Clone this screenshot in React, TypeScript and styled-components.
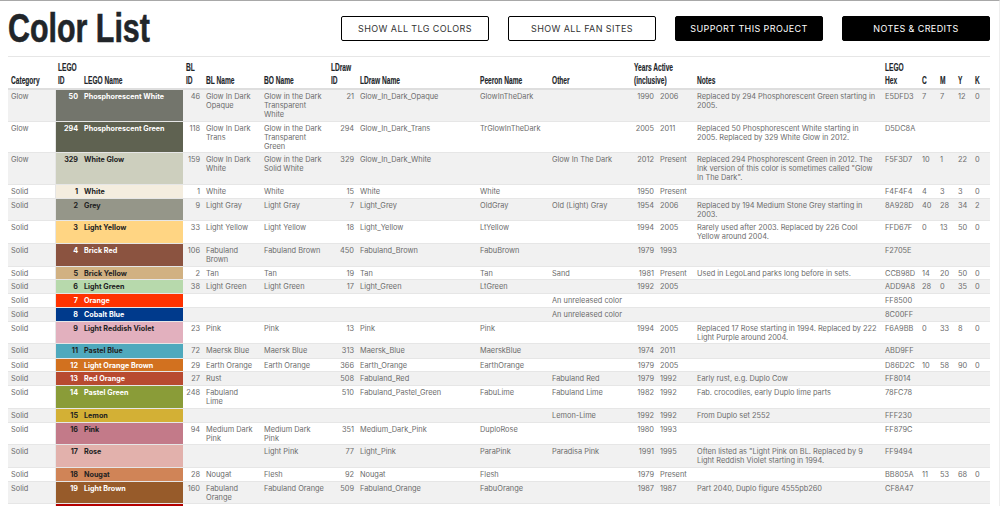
import styled, { createGlobalStyle } from 'styled-components';

const GlobalStyle = createGlobalStyle`
  html, body {
    margin: 0;
    padding: 0;
    height: 506px;
    overflow: hidden;
    background: #fff;
  }
`;

const Page = styled.div`
  width: 1000px;
  height: 506px;
  overflow: hidden;
  box-sizing: border-box;
  border-top: 1px solid #a8a8a8;
  border-right: 1px solid #eee;
  padding: 0 9px 0 8px;
  font-family: 'Inter', 'Liberation Sans', sans-serif;
`;

const TopBar = styled.div`
  display: flex;
  align-items: flex-start;
  justify-content: space-between;
  height: 55px;
`;

const Title = styled.h1`
  margin: 5px 0 0;
  font-family: 'Liberation Sans', sans-serif;
  font-weight: 700;
  font-size: 40px;
  line-height: 44px;
  color: #212529;
  white-space: nowrap;
  -webkit-text-stroke: 0.6px #212529;
  transform: scaleX(0.76);
  transform-origin: left center;
`;

const Buttons = styled.div`
  display: flex;
  gap: 19px;
  margin-top: 15px;
`;

const Button = styled.div<{ $dark?: boolean }>`
  box-sizing: border-box;
  width: 148px;
  height: 25px;
  display: flex;
  align-items: center;
  justify-content: center;
  border: 1px solid #000;
  border-radius: 2px;
  font-size: 9px;
  letter-spacing: 0.4px;
  color: ${(p) => (p.$dark ? '#fff' : '#333')};
  background: ${(p) => (p.$dark ? '#000' : '#fff')};
`;

const Table = styled.table`
  width: 982px;
  table-layout: fixed;
  border-collapse: collapse;
  border-top: 1px solid #e6e6e6;
  color: #6c6c6c;
  font-size: 7.4px;
  line-height: 9px;
`;

const Th = styled.th`
  padding: 4px 3px 1px;
  font-family: 'Liberation Sans', sans-serif;
  font-weight: 700;
  font-size: 10px;
  line-height: 13px;
  color: #212529;
  text-align: left;
  vertical-align: bottom;
  white-space: nowrap;
  border-bottom: 2px solid #dedede;
`;

// Oswald is not installed, so the heading text is squeezed to its width
const Condensed = styled.span`
  display: inline-block;
  transform: scaleX(0.66);
  transform-origin: left center;
  -webkit-text-stroke: 0.15px #212529;
`;

const Tr = styled.tr<{ $h: number; $striped: boolean }>`
  height: ${(p) => p.$h}px;
  background: ${(p) => (p.$striped ? '#f1f1f1' : '#fff')};
`;

const Td = styled.td<{ $right?: boolean }>`
  padding: 2px 3px 1px;
  vertical-align: top;
  text-align: ${(p) => (p.$right ? 'right' : 'left')};
  white-space: pre-line;
  border-bottom: 1px solid #e6e6e6;
  overflow: hidden;
`;

const SwatchId = styled(Td)<{ $bg: string; $fg: string }>`
  background: ${(p) => p.$bg};
  color: ${(p) => p.$fg};
  font-weight: 700;
  font-size: 7.2px;
  text-align: right;
  border-left: 1px solid #e6e6e6;
`;

const SwatchName = styled(Td)<{ $bg: string; $fg: string }>`
  background: ${(p) => p.$bg};
  color: ${(p) => p.$fg};
  font-weight: 700;
  font-size: 7.2px;
  white-space: nowrap;
`;

type Row = {
  cat?: string;
  id?: string;
  name?: string;
  bg: string;
  fg: string;
  h: number;
  bl?: string;
  blName?: string;
  bo?: string;
  ld?: string;
  ldName?: string;
  peeron?: string;
  other?: string;
  from?: string;
  to?: string;
  notes?: string;
  hex?: string;
  c?: string;
  m?: string;
  y?: string;
  k?: string;
};

const W = '#fff';
const K = '#222';

const rows: Row[] = [
  { cat: 'Glow', id: '50', name: 'Phosphorescent White', bg: '#73756c', fg: W, h: 32, bl: '46', blName: 'Glow In Dark\nOpaque', bo: 'Glow in the Dark\nTransparent\nWhite', ld: '21', ldName: 'Glow_In_Dark_Opaque', peeron: 'GlowInTheDark', from: '1990', to: '2006', notes: 'Replaced by 294 Phosphorescent Green starting in 2005.', hex: 'E5DFD3', c: '7', m: '7', y: '12', k: '0' },
  { cat: 'Glow', id: '294', name: 'Phosphorescent Green', bg: '#5f6251', fg: W, h: 31, bl: '118', blName: 'Glow In Dark\nTrans', bo: 'Glow in the Dark\nTransparent\nGreen', ld: '294', ldName: 'Glow_In_Dark_Trans', peeron: 'TrGlowInTheDark', from: '2005', to: '2011', notes: 'Replaced 50 Phosphorescent White starting in 2005. Replaced by 329 White Glow in 2012.', hex: 'D5DC8A' },
  { cat: 'Glow', id: '329', name: 'White Glow', bg: '#cdcfbe', fg: K, h: 32, bl: '159', blName: 'Glow In Dark\nWhite', bo: 'Glow in the Dark\nSolid White', ld: '329', ldName: 'Glow_In_Dark_White', other: 'Glow In The Dark', from: '2012', to: 'Present', notes: 'Replaced 294 Phosphorescent Green in 2012. The Ink version of this color is sometimes called "Glow In The Dark".', hex: 'F5F3D7', c: '10', m: '1', y: '22', k: '0' },
  { cat: 'Solid', id: '1', name: 'White', bg: '#f4eddf', fg: K, h: 14, bl: '1', blName: 'White', bo: 'White', ld: '15', ldName: 'White', peeron: 'White', from: '1950', to: 'Present', hex: 'F4F4F4', c: '4', m: '3', y: '3', k: '0' },
  { cat: 'Solid', id: '2', name: 'Grey', bg: '#959689', fg: K, h: 22, bl: '9', blName: 'Light Gray', bo: 'Light Gray', ld: '7', ldName: 'Light_Grey', peeron: 'OldGray', other: 'Old (Light) Gray', from: '1954', to: '2006', notes: 'Replaced by 194 Medium Stone Grey starting in 2003.', hex: '8A928D', c: '40', m: '28', y: '34', k: '2' },
  { cat: 'Solid', id: '3', name: 'Light Yellow', bg: '#ffd583', fg: K, h: 23, bl: '33', blName: 'Light Yellow', bo: 'Light Yellow', ld: '18', ldName: 'Light_Yellow', peeron: 'LtYellow', from: '1994', to: '2005', notes: 'Rarely used after 2003. Replaced by 226 Cool Yellow around 2004.', hex: 'FFD67F', c: '0', m: '13', y: '50', k: '0' },
  { cat: 'Solid', id: '4', name: 'Brick Red', bg: '#8b5340', fg: W, h: 23, bl: '106', blName: 'Fabuland\nBrown', bo: 'Fabuland Brown', ld: '450', ldName: 'Fabuland_Brown', peeron: 'FabuBrown', from: '1979', to: '1993', hex: 'F2705E' },
  { cat: 'Solid', id: '5', name: 'Brick Yellow', bg: '#d1b182', fg: K, h: 13, bl: '2', blName: 'Tan', bo: 'Tan', ld: '19', ldName: 'Tan', peeron: 'Tan', other: 'Sand', from: '1981', to: 'Present', notes: 'Used in LegoLand parks long before in sets.', hex: 'CCB98D', c: '14', m: '20', y: '50', k: '0' },
  { cat: 'Solid', id: '6', name: 'Light Green', bg: '#b7d9ac', fg: K, h: 14, bl: '38', blName: 'Light Green', bo: 'Light Green', ld: '17', ldName: 'Light_Green', peeron: 'LtGreen', from: '1992', to: '2005', hex: 'ADD9A8', c: '28', m: '0', y: '35', k: '0' },
  { cat: 'Solid', id: '7', name: 'Orange', bg: '#ff3300', fg: W, h: 14, other: 'An unreleased color', hex: 'FF8500' },
  { cat: 'Solid', id: '8', name: 'Cobalt Blue', bg: '#003a8c', fg: W, h: 14, other: 'An unreleased color', hex: '8C00FF' },
  { cat: 'Solid', id: '9', name: 'Light Reddish Violet', bg: '#e2b0be', fg: K, h: 22, bl: '23', blName: 'Pink', bo: 'Pink', ld: '13', ldName: 'Pink', peeron: 'Pink', from: '1994', to: '2005', notes: 'Replaced 17 Rose starting in 1994. Replaced by 222 Light Purple around 2004.', hex: 'F6A9BB', c: '0', m: '33', y: '8', k: '0' },
  { cat: 'Solid', id: '11', name: 'Pastel Blue', bg: '#4fa9bd', fg: K, h: 15, bl: '72', blName: 'Maersk Blue', bo: 'Maersk Blue', ld: '313', ldName: 'Maersk_Blue', peeron: 'MaerskBlue', from: '1974', to: '2011', hex: 'ABD9FF' },
  { cat: 'Solid', id: '12', name: 'Light Orange Brown', bg: '#d2711f', fg: W, h: 13, bl: '29', blName: 'Earth Orange', bo: 'Earth Orange', ld: '366', ldName: 'Earth_Orange', peeron: 'EarthOrange', from: '1979', to: '2005', hex: 'D86D2C', c: '10', m: '58', y: '90', k: '0' },
  { cat: 'Solid', id: '13', name: 'Red Orange', bg: '#b84a30', fg: W, h: 14, bl: '27', blName: 'Rust', ld: '508', ldName: 'Fabuland_Red', other: 'Fabuland Red', from: '1979', to: '1992', notes: 'Early rust, e.g. Duplo Cow', hex: 'FF8014' },
  { cat: 'Solid', id: '14', name: 'Pastel Green', bg: '#8a9c38', fg: W, h: 23, bl: '248', blName: 'Fabuland\nLime', ld: '510', ldName: 'Fabuland_Pastel_Green', peeron: 'FabuLime', other: 'Fabuland Lime', from: '1982', to: '1992', notes: 'Fab. crocodiles, early Duplo lime parts', hex: '78FC78' },
  { cat: 'Solid', id: '15', name: 'Lemon', bg: '#d3b035', fg: K, h: 14, other: 'Lemon-Lime', from: '1992', to: '1992', notes: 'From Duplo set 2552', hex: 'FFF230' },
  { cat: 'Solid', id: '16', name: 'Pink', bg: '#c37a89', fg: K, h: 22, bl: '94', blName: 'Medium Dark\nPink', bo: 'Medium Dark\nPink', ld: '351', ldName: 'Medium_Dark_Pink', peeron: 'DuploRose', from: '1980', to: '1993', hex: 'FF879C' },
  { cat: 'Solid', id: '17', name: 'Rose', bg: '#e2b1ac', fg: K, h: 23, bo: 'Light Pink', ld: '77', ldName: 'Light_Pink', peeron: 'ParaPink', other: 'Paradisa Pink', from: '1991', to: '1995', notes: 'Often listed as "Light Pink on BL. Replaced by 9 Light Reddish Violet starting in 1994.', hex: 'FF9494' },
  { cat: 'Solid', id: '18', name: 'Nougat', bg: '#d08457', fg: K, h: 14, bl: '28', blName: 'Nougat', bo: 'Flesh', ld: '92', ldName: 'Nougat', peeron: 'Flesh', from: '1979', to: 'Present', hex: 'BB805A', c: '11', m: '53', y: '68', k: '0' },
  { cat: 'Solid', id: '19', name: 'Light Brown', bg: '#975b2a', fg: W, h: 22, bl: '160', blName: 'Fabuland\nOrange', bo: 'Fabuland Orange', ld: '509', ldName: 'Fabuland_Orange', peeron: 'FabuOrange', from: '1987', to: '1987', notes: 'Part 2040, Duplo figure 4555pb260', hex: 'CF8A47' },
  { bg: '#b40000', fg: W, h: 14 },
];

const widths = [47, 26, 102, 20, 58, 67, 29, 120, 72, 82, 26, 37, 188, 37, 18, 18, 17, 18];

export default function App() {
  return (
    <Page>
      <GlobalStyle />
      <TopBar>
        <Title>Color List</Title>
        <Buttons>
          <Button>SHOW ALL TLG COLORS</Button>
          <Button>SHOW ALL FAN SITES</Button>
          <Button $dark>SUPPORT THIS PROJECT</Button>
          <Button $dark>NOTES &amp; CREDITS</Button>
        </Buttons>
      </TopBar>
      <Table>
        <colgroup>
          {widths.map((w, i) => (
            <col key={i} width={w} />
          ))}
        </colgroup>
        <thead>
          <tr>
            <Th><Condensed>Category</Condensed></Th>
            <Th><Condensed>LEGO<br />ID</Condensed></Th>
            <Th><Condensed>LEGO Name</Condensed></Th>
            <Th><Condensed>BL<br />ID</Condensed></Th>
            <Th><Condensed>BL Name</Condensed></Th>
            <Th><Condensed>BO Name</Condensed></Th>
            <Th><Condensed>LDraw<br />ID</Condensed></Th>
            <Th><Condensed>LDraw Name</Condensed></Th>
            <Th><Condensed>Peeron Name</Condensed></Th>
            <Th><Condensed>Other</Condensed></Th>
            <Th colSpan={2}><Condensed>Years Active<br />(inclusive)</Condensed></Th>
            <Th><Condensed>Notes</Condensed></Th>
            <Th><Condensed>LEGO<br />Hex</Condensed></Th>
            <Th><Condensed>C</Condensed></Th>
            <Th><Condensed>M</Condensed></Th>
            <Th><Condensed>Y</Condensed></Th>
            <Th><Condensed>K</Condensed></Th>
          </tr>
        </thead>
        <tbody>
          {rows.map((r, i) => (
            <Tr key={i} $h={r.h} $striped={i % 2 === 0}>
              <Td>{r.cat}</Td>
              <SwatchId $bg={r.bg} $fg={r.fg}>{r.id}</SwatchId>
              <SwatchName $bg={r.bg} $fg={r.fg}>{r.name}</SwatchName>
              <Td $right>{r.bl}</Td>
              <Td>{r.blName}</Td>
              <Td>{r.bo}</Td>
              <Td $right>{r.ld}</Td>
              <Td>{r.ldName}</Td>
              <Td>{r.peeron}</Td>
              <Td>{r.other}</Td>
              <Td $right>{r.from}</Td>
              <Td>{r.to}</Td>
              <Td>{r.notes}</Td>
              <Td>{r.hex}</Td>
              <Td>{r.c}</Td>
              <Td>{r.m}</Td>
              <Td>{r.y}</Td>
              <Td>{r.k}</Td>
            </Tr>
          ))}
        </tbody>
      </Table>
    </Page>
  );
}
